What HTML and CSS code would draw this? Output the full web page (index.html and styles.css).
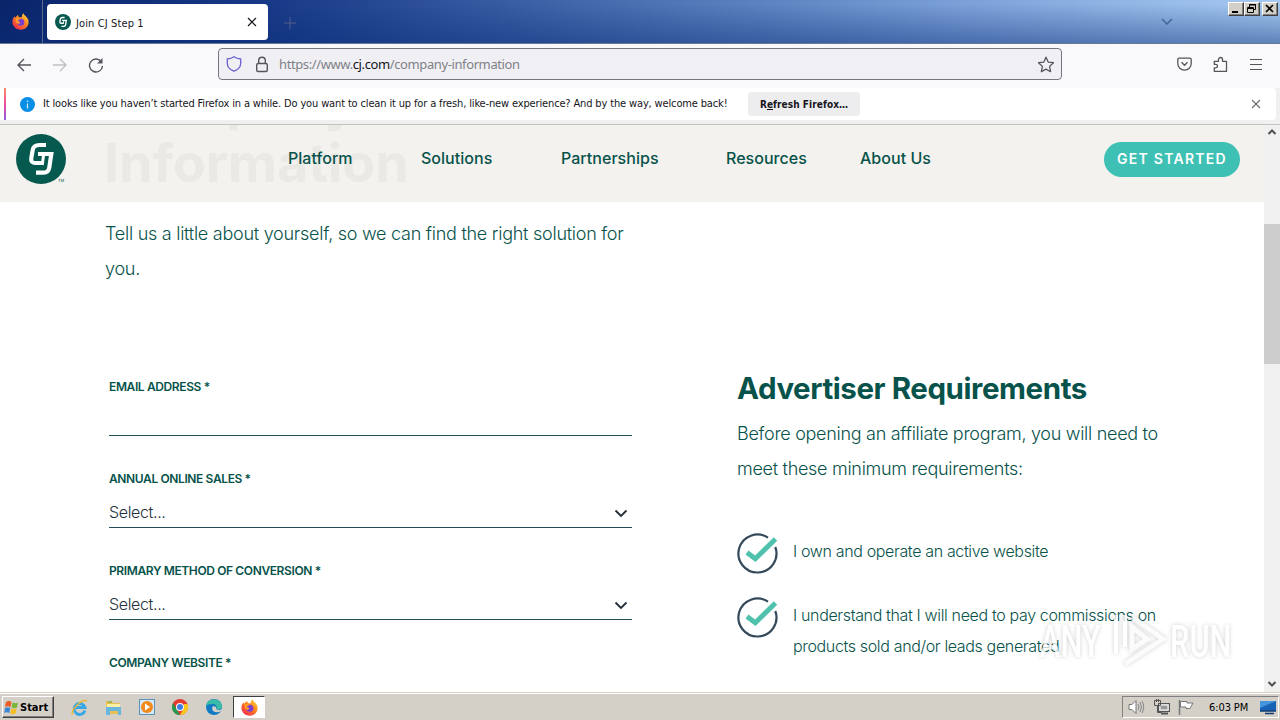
FILE: index.html
```html
<!DOCTYPE html>
<html lang="en">
<head>
<meta charset="utf-8">
<title>Join CJ Step 1</title>
<link rel="stylesheet" href="styles.css">
</head>
<body>
<svg width="0" height="0" class="defs">
  <defs>
    <linearGradient id="fire" x1="1" y1="0" x2="0.2" y2="1"><stop offset="0" stop-color="#ffe44a"/><stop offset=".45" stop-color="#ff8a1c"/><stop offset="1" stop-color="#f0284f"/></linearGradient>
    <symbol id="firefox" viewBox="0 0 16 16">
      <path d="M11 .3c.2 1.700 1.500 2.200 2.600 3.500 1.300 1.500 2.300 3 2 5.500C15.100 13 12 15.700 8 15.700S.5 12.600.4 8.500C.3 6 1.300 4.200 2.500 3c.1.700.3 1.200.6 1.500C4 3.100 5.200 2 5.800 1.800c0 1 .5 2 1.500 2.300h2C9 3 9.500 1.300 11 .3z" fill="url(#fire)"/>
      <circle cx="8.300" cy="8.800" r="3.300" fill="#7a3fd0"/>
      <path d="M3.200 5c1.700-.5 3.300 0 4.600 1.100-1.200.1-2.300.8-2.500 1.700 1.600-.5 2.800 1 2.100 1.800-1 1.100-2.700.4-3.600-.6z" fill="#ff9a26"/>
    </symbol>
    <symbol id="cj" viewBox="0 0 50 50">
      <circle cx="25" cy="25" r="25" fill="#06594f"/>
      <path d="M30 11H23.500Q17.500 11 16.700 16L15.300 24Q14.500 29 19.500 29H25" fill="none" stroke="#fff" stroke-width="4.200"/>
      <path d="M22 20H35.300L33.300 33.500Q32.500 38.700 27.500 38.700H20" fill="none" stroke="#fff" stroke-width="4.200"/>
      <path d="M27.500 21.500L26.200 31" stroke="#fff" stroke-width="3"/>
    </symbol>
    <symbol id="check" viewBox="0 0 42 42">
      <path d="M31 4.700A19 19 0 1 0 38.300 14" fill="none" stroke="#34495a" stroke-width="2.200"/>
      <path d="M10 19.500L18.300 25.800L38.500 6" fill="none" stroke="#4fc1ad" stroke-width="5"/>
    </symbol>
  </defs>
</svg>

<div class="tabbar">
  <div class="launcher"><svg width="17" height="17"><use href="#firefox"/></svg></div>
  <div class="tab">
    <svg width="16" height="16"><use href="#cj"/></svg>
    <span class="tab-title">Join CJ Step 1</span>
    <svg width="10" height="10" viewBox="0 0 10 10"><path d="M1 1l8 8M9 1l-8 8" stroke="#15141a" stroke-width="1.200"/></svg>
  </div>
  <svg class="newtab" width="12" height="12"><path d="M6 0v12M0 6h12" stroke="#505f87"/></svg>
  <svg class="alltabs" width="12" height="8"><path d="M1 1l5 5 5-5" fill="none" stroke="#426493" stroke-width="1.500"/></svg>
  <div class="winbtns">
    <span class="winbtn"><svg width="13" height="11"><path d="M3 9h6" stroke="#000" stroke-width="2"/></svg></span>
    <span class="winbtn"><svg width="13" height="11"><path d="M4.500 4.500v-3h6v5h-2M4 2h7" fill="none" stroke="#000"/><path d="M2.500 4.500h6v5h-6zM2 5.500h7" fill="none" stroke="#000"/></svg></span>
    <span class="winbtn gap"><svg width="13" height="11"><path d="M3 2l7 7M10 2l-7 7" stroke="#000" stroke-width="1.700"/></svg></span>
  </div>
</div>

<div class="toolbar">
  <div class="navbtns">
    <svg width="16" height="16"><path d="M15 8H2M8 2L2 8l6 6" fill="none" stroke="#55545d" stroke-width="1.400"/></svg>
    <svg width="16" height="16"><path d="M1 8h13M8 2l6 6-6 6" fill="none" stroke="#c0bfc5" stroke-width="1.400"/></svg>
    <svg width="16" height="16"><path d="M13.500 5A6.500 6.500 0 1 0 14.500 9" fill="none" stroke="#55545d" stroke-width="1.400"/><path d="M14.500 1v5.500H9z" fill="#55545d"/></svg>
  </div>
  <div class="urlbar">
    <svg width="16" height="16"><path d="M8 .8C10 2.300 12 2.800 14.700 3v4.200c0 3.800-3.200 6.700-6.700 8-3.500-1.300-6.700-4.200-6.700-8V3C4 2.800 6 2.300 8 .8z" fill="none" stroke="#6a5fd0" stroke-width="1.300"/></svg>
    <svg class="lock" width="14" height="17"><rect x="1.700" y="7.500" width="10.600" height="8" rx="1.500" fill="none" stroke="#55545d" stroke-width="1.400"/><path d="M3.700 7.500v-3a3.300 3.300 0 0 1 6.600 0v3" fill="none" stroke="#55545d" stroke-width="1.400"/></svg>
    <span class="url">https://www.<b>cj.com</b>/company-information</span>
    <svg width="18" height="17"><path d="M9 1.200l2.200 4.900 5.300.6-3.900 3.700 1 5.300L9 13.100l-4.600 2.600 1-5.300L1.500 6.700l5.300-.6z" fill="none" stroke="#55545d" stroke-width="1.300" stroke-linejoin="round"/></svg>
  </div>
  <div class="tools">
    <svg width="15" height="15"><path d="M2.200 1.200h10.600q1.400 0 1.400 1.400V6.500a6.700 6.700 0 0 1-13.400 0V2.600Q.8 1.200 2.200 1.200zM4.500 5.300l3 3 3-3" fill="none" stroke="#55545d" stroke-width="1.300"/></svg>
    <svg width="15" height="17"><path d="M1.300 5.300h4.200V3.500a2 2 0 0 1 4 0v1.800h4v10H1.300v-3.500h1.500a1.700 1.700 0 0 0 0-3.400H1.300z" fill="none" stroke="#55545d" stroke-width="1.300" stroke-linejoin="round"/></svg>
    <svg width="12" height="12"><path d="M0 .5h12M0 5.500h12M0 10.500h12" stroke="#55545d" stroke-width="1.200"/></svg>
  </div>
</div>

<div class="notice">
  <div class="notice-box">
    <span class="stripe"></span>
    <svg class="info" width="15" height="15"><circle cx="7.500" cy="7.500" r="7.500" fill="#098ee5"/><path d="M7.500 6.500v5M7.500 3.500v1.500" stroke="#cbe9ff" stroke-width="1.300"/></svg>
    <span class="message">It looks like you haven’t started Firefox in a while. Do you want to clean it up for a fresh, like-new experience? And by the way, welcome back!</span>
    <button class="refresh">R<u>e</u>fresh Firefox…</button>
    <svg class="dismiss" width="10" height="10"><path d="M1 1l8 8M9 1l-8 8" stroke="#6b6a70" stroke-width="1.100"/></svg>
  </div>
</div>

<div class="viewport">
  <div class="page">
    <header class="site-header">
      <div class="ghost">Company<br>Information</div>
      <svg class="logo" width="50" height="50"><use href="#cj"/></svg><span class="tm">TM</span>
      <nav><a>Platform</a><a>Solutions</a><a>Partnerships</a><a>Resources</a><a>About Us</a></nav>
      <a class="cta">GET STARTED</a>
    </header>
    <p class="intro">Tell us a little about yourself, so we can find the right solution for<br>you.</p>
    <div class="columns">
      <form class="form">
        <div class="field"><label>EMAIL ADDRESS *</label><div class="control"></div></div>
        <div class="field"><label>ANNUAL ONLINE SALES *</label><div class="control"><span>Select...</span><svg width="14" height="9"><path d="M1.500 1.500l5.500 5.500 5.500-5.500" fill="none" stroke="#222d38" stroke-width="1.800"/></svg></div></div>
        <div class="field"><label>PRIMARY METHOD OF CONVERSION *</label><div class="control"><span>Select...</span><svg width="14" height="9"><path d="M1.500 1.500l5.500 5.500 5.500-5.500" fill="none" stroke="#222d38" stroke-width="1.800"/></svg></div></div>
        <div class="field"><label>COMPANY WEBSITE *</label></div>
      </form>
      <section class="reqs">
        <h2>Advertiser Requirements</h2>
        <p class="lead">Before opening an affiliate program, you will need to<br>meet these minimum requirements:</p>
        <div class="req"><svg width="42" height="42"><use href="#check"/></svg><p>I own and operate an active website</p></div>
        <div class="req"><svg width="42" height="42"><use href="#check"/></svg><p>I understand that I will need to pay commissions on<br>products sold and/or leads generated</p></div>
      </section>
    </div>
    <div class="watermark">
      <span>ANY</span>
      <svg width="56" height="62" viewBox="0 0 56 62"><path d="M4 4v39M13 4v32" fill="none" stroke="#fff" stroke-width="4"/><path d="M20 6L51 28L13 53M20 16L35 28L20 38z" fill="none" stroke="#fafafa" stroke-width="5"/></svg>
      <span>RUN</span>
    </div>
  </div>
  <div class="scrollbar">
    <svg width="10" height="8"><path d="M1.500 6L5 2.500 8.500 6" fill="none" stroke="#505050" stroke-width="2"/></svg>
    <div class="thumb"></div>
    <svg width="10" height="8"><path d="M1.500 2L5 5.500 8.500 2" fill="none" stroke="#505050" stroke-width="2"/></svg>
  </div>
</div>

<div class="taskbar">
  <div class="start"><svg width="15" height="15" viewBox="0 0 15 15"><path d="M2 2q3-2 5.500 0L6.500 7Q4 5.500 1 7z" fill="#e95b25"/><path d="M8.500 2.500q3 1.500 5.500 0l-1 5q-3 1.500-5.500 0z" fill="#7bb63c"/><path d="M1 8q3-1.500 5.300 0l-1 5q-2.500-1.500-5 0z" fill="#3c87d5"/><path d="M7.200 8.500q3 1.500 5.500 0l-1 5q-3 1.500-5.500 0z" fill="#f6bd27"/></svg><span>Start</span></div>
  <div class="apps">
    <svg width="17" height="17"><path d="M14 11.500A5.500 5.500 0 1 1 14 8.500H4" fill="none" stroke="#39a6e5" stroke-width="2.800"/><path d="M1.500 15.500C-.5 12 10-.5 16 2" fill="none" stroke="#eab832" stroke-width="1.500"/></svg>
    <svg width="17" height="17"><path d="M1 2h6l1 2h7v11H1z" fill="#e8bf51"/><path d="M2 5h13v3H2z" fill="#fff0a6"/><path d="M1 8h15v8h-3v-4H5v4H1z" fill="#69b7dc"/><path d="M3 3h4" stroke="#5eaa53"/></svg>
    <svg width="17" height="17"><rect x=".5" y=".5" width="15" height="15" fill="#d6e9f8" stroke="#5b91bf"/><circle cx="8" cy="8" r="6" fill="#f18a1c"/><path d="M6 4.500v7l5-3.500z" fill="#fff"/></svg>
    <svg width="17" height="17"><circle cx="8" cy="8" r="8" fill="#e23d30"/><path d="M1 4l4 7 3 5A8 8 0 0 1 1 4z" fill="#229b50"/><path d="M8 16l4-7V5h3.500A8 8 0 0 1 8 16z" fill="#f9c91b"/><circle cx="8" cy="8" r="4" fill="#fff"/><circle cx="8" cy="8" r="3" fill="#3e7de8"/></svg>
    <svg width="17" height="17"><circle cx="8" cy="8" r="8" fill="#127ac4"/><path d="M0 7C2-2 15-1 16 7c0 4-4 4-6 3 2-3-1-6-5-5-2 0-4 1-5 2z" fill="#3bbda5"/><path d="M7 7c-3 5 3 8 8 5l1-1v-1c-3 2-7 1-6-2z" fill="#d4d0c8"/></svg>
    <div class="active"><svg width="17" height="17"><use href="#firefox"/></svg></div>
  </div>
  <div class="tray">
    <svg width="17" height="16"><path d="M1 5.500h3l4-4v13l-4-4H1z" fill="#fff" stroke="#777"/><path d="M10 5q2 3 0 6M12 3q3 5 0 10M14 2q3.500 6 0 12" fill="none" stroke="#888"/></svg>
    <svg width="17" height="16"><rect x="5.500" y="4.500" width="11" height="8" fill="#b8b8b8" stroke="#555"/><rect x="7" y="6" width="8" height="5" fill="#999" stroke="#fff"/><path d="M8 14.500h7" stroke="#555" stroke-width="2"/><path d="M1.500 1.500h6v5h-6zM3.500 0v3M5.500 0v3M4.500 6v7.500h4" fill="none" stroke="#555"/></svg>
    <svg width="16" height="16"><path d="M1.500 1v15" stroke="#777" stroke-width="1.500"/><path d="M2.500 2.500H9V4h6l-2 3.500-1 2H8V8H2.500z" fill="#fff" stroke="#777"/></svg>
    <span class="clock">6:03 PM</span>
    <svg width="16" height="15"><path d="M0 1h16v10H0z" fill="#1762b5"/><path d="M0 1h16L0 8z" fill="#4595dd"/><path d="M0 11h16M5 13.500h9" stroke="#123d70" stroke-width="1.500"/></svg>
  </div>
</div>
</body>
</html>
```
FILE: styles.css
```css
* { box-sizing: border-box; }
body { margin: 0; width: 1280px; height: 720px; overflow: hidden; display: flex; flex-direction: column; background: #fff; font-family: "DejaVu Sans Condensed", "DejaVu Sans", sans-serif; font-size: 11px; color: #15141a; }
svg { display: block; flex: none; }
p, h2 { margin: 0; }
.defs { position: absolute; }

.tabbar { height: 44px; flex: none; display: flex; align-items: flex-start; background: linear-gradient(180deg, rgba(10,36,106,0) 10%, rgba(10,46,120,.45)), linear-gradient(90deg, #0a246a 0, #183987 270px, #4c72b3 650px, #7ba0d8 960px, #a6caf0 1280px); border-bottom: 1px solid #6a7895; }
.launcher { width: 43px; height: 43px; padding: 13px 0 0 12px; border-right: 1px solid #59698f; }
.tab { margin: 4px 0 0 4px; width: 221px; height: 36px; border-radius: 4px; background: #fff; display: flex; align-items: center; padding: 0 11px 0 8px; }
.tab-title { flex: 1; padding-left: 5px; padding-top: 2px; letter-spacing: .12px; }
.newtab { margin: 17px 0 0 16px; }
.alltabs { margin: 18px 0 0 865px; }
.winbtns { margin: 2px 0 0 55px; display: flex; }
.winbtn { width: 16px; height: 14px; background: #d4d0c8; border: 1px solid; border-color: #fff #404040 #404040 #fff; box-shadow: inset -1px -1px #808080; }
.winbtn.gap { margin-left: 2px; }

.toolbar { height: 44px; flex: none; display: flex; align-items: flex-start; background: #f9f9fb; }
.navbtns { display: flex; gap: 20px; padding: 13px 0 0 16px; width: 218px; }
.urlbar { margin-top: 4px; width: 844px; height: 32px; border: 1px solid #77767d; border-radius: 4px; background: #f0f0f4; display: flex; align-items: center; padding: 0 6px 0 7px; }
.lock { margin-left: 13px; }
.url { flex: 1; margin-left: 10px; font: 13px "Noto Sans", sans-serif; color: #818087; letter-spacing: -.39px; }
.url b { font-weight: 400; color: #15141a; }
.tools { display: flex; align-items: center; gap: 21px; padding: 12px 0 0 115px; }
.tools svg:last-child { margin-left: 1px; }

.notice { height: 37px; flex: none; background: #f0f0f0; border-bottom: 1px solid #bfc5c5; }
.notice-box { height: 32px; width: 1276px; background: #fff; border-radius: 0 4px 4px 0; display: flex; align-items: center; }
.stripe { width: 2px; height: 32px; margin-left: 4px; background: linear-gradient(#f98d6b, #ed4d9b, #9059e0); }
.info { margin-left: 14px; }
.message { margin-left: 8px; width: 705px; padding-bottom: 2px; white-space: nowrap; letter-spacing: -.145px; }
.refresh { width: 112px; height: 24px; border: 0; border-radius: 4px; background: #ededf0; padding: 0; font: bold 10px "DejaVu Sans Condensed", sans-serif; color: #15141a; letter-spacing: .07px; white-space: nowrap; }
.dismiss { margin-left: 391px; }

.viewport { height: 567px; flex: none; display: flex; overflow: hidden; }
.page { width: 1264px; position: relative; color: #07524a; font-family: Inter, sans-serif; overflow: hidden; }
.site-header { height: 77px; background: #f4f2ee; display: flex; position: relative; overflow: hidden; }
.ghost { position: absolute; left: 104px; top: -55px; font-size: 54px; line-height: 62px; font-weight: 700; color: #eae9e6; letter-spacing: -.15px; }
.logo { margin: 9px 0 0 16px; }
.tm { width: 8px; font-size: 4px; padding-top: 53px; margin-left: -8px; }
nav { margin-left: 222px; width: 816px; display: grid; grid-template-columns: 133px 140px 165px 134px auto; position: relative; padding-top: 23px; font-size: 16px; line-height: 21px; font-weight: 500; white-space: nowrap; letter-spacing: .03px; }
.cta { margin-top: 17px; width: 136px; height: 35px; border-radius: 18px; background: #3fc0b4; color: #fff; font-size: 14px; font-weight: 600; letter-spacing: 1.250px; line-height: 34px; text-align: center; white-space: nowrap; }
.intro { padding: 14px 0 0 105px; font-size: 18px; line-height: 35px; font-weight: 300; white-space: nowrap; letter-spacing: -.26px; }
.columns { display: flex; padding-left: 109px; }
.form { width: 523px; padding-top: 93px; }
.field { height: 92px; }
.field label { display: block; height: 16px; line-height: 16px; font-size: 12px; font-weight: 600; white-space: nowrap; letter-spacing: -.38px; }
.control { height: 41px; border-bottom: 1px solid #214c58; display: flex; align-items: flex-end; justify-content: space-between; padding: 0 4px 4px 0; color: #24313b; font-size: 16px; line-height: 21px; font-weight: 300; letter-spacing: -.35px; }
.control svg { margin-bottom: 5px; }
.reqs { margin-left: 105px; padding-top: 82px; white-space: nowrap; }
h2 { font-size: 29.500px; line-height: 40px; font-weight: 700; letter-spacing: -.43px; }
.lead { margin-top: 8px; font-size: 18px; line-height: 35px; font-weight: 300; letter-spacing: -.29px; }
.req { display: flex; margin-top: 22px; font-size: 16px; line-height: 31px; font-weight: 300; letter-spacing: -.35px; }
.lead + .req { margin-top: 47px; }
.req p { margin: 3px 0 0 14px; }

.watermark { position: absolute; left: 1040px; top: 486px; display: flex; align-items: center; gap: 8px; height: 62px; filter: drop-shadow(0 0 2px rgba(0,0,0,.25)); opacity: .75; }
.watermark span { font: 500 44px/60px Roboto, sans-serif; color: #fff; width: 64px; display: block; transform: scaleX(.7); transform-origin: left; white-space: nowrap; }
.watermark span:last-child { margin-left: -6px; }

.scrollbar { width: 16px; background: #f0f0f0; display: flex; flex-direction: column; align-items: center; padding: 3px 0 4px; }
.thumb { width: 16px; height: 140px; margin: 88px 0 auto; background: #cdcdcd; }

.taskbar { height: 28px; flex: none; display: flex; background: #d4d0c8; border-top: 1px solid #d4d0c8; box-shadow: inset 0 1px #fff; padding-top: 3px; }
.start { width: 52px; height: 22px; margin-left: 2px; border: 1px solid; border-color: #fff #404040 #404040 #fff; box-shadow: inset -1px -1px #808080; display: flex; align-items: center; padding-left: 1px; gap: 1px; font-weight: 700; color: #000; letter-spacing: 0; }
.apps { width: 211px; margin-left: 17px; display: flex; gap: 16.800px; padding-top: 3px; }
.active { width: 32px; height: 22px; margin: -3px 0 0 -7px; background: #fff; border: 1px solid; border-color: #404040 #fff #fff #404040; padding: 2px 0 0 7px; flex: none; }
.tray { margin-left: 840px; width: 157px; height: 22px; border: 1px solid; border-color: #808080 #fff #fff #808080; display: flex; align-items: center; padding-left: 5px; gap: 8px; }
.clock { width: 43px; margin-left: 7px; color: #000; white-space: nowrap; letter-spacing: -.1px; }
```
